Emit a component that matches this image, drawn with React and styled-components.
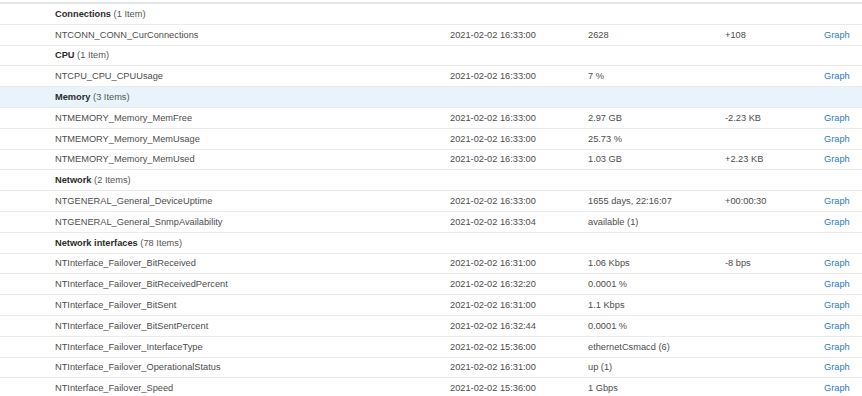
import React from 'react'
import styled, { createGlobalStyle } from 'styled-components'

const GlobalStyle = createGlobalStyle`
    html, body {
        margin: 0;
        padding: 0;
        background: #fff;
    }
    body {
        font-family: "Liberation Sans", Arial, sans-serif;
        font-size: 9.25px;
        color: #4a4a4a;
    }
`

const Table = styled.div`
    width: 862px;
    padding-top: 2px;
    border-top: 0;
    box-sizing: border-box;
    overflow: hidden;
`

const TopEdge = styled.div`
    height: 2px;
    background: #e2e5e9;
`

const Row = styled.div`
    display: grid;
    grid-template-columns: 395px 138px 137px 99px 1fr;
    align-items: center;
    height: 19.8px;
    padding-left: 55px;
    border-bottom: 1px solid #ebebeb;
    background: ${p => (p.$active ? '#e8f3fc' : '#fff')};
    white-space: nowrap;
`

const GroupTitle = styled.div`
    grid-column: 1 / -1;
    color: #3a3a3a;
    b {
        font-weight: bold;
        color: #2b2b2b;
    }
    span {
        color: #555;
    }
`

const Cell = styled.div`
    color: #4d4d4d;
`

const GraphLink = styled.a`
    color: #2b7bc0;
    text-decoration: none;
    cursor: pointer;
`

const groups = [
    {
        name: 'Connections',
        count: '1 Item',
        items: [['NTCONN_CONN_CurConnections', '2021-02-02 16:33:00', '2628', '+108']],
    },
    {
        name: 'CPU',
        count: '1 Item',
        items: [['NTCPU_CPU_CPUUsage', '2021-02-02 16:33:00', '7 %', '']],
    },
    {
        name: 'Memory',
        count: '3 Items',
        active: true,
        items: [
            ['NTMEMORY_Memory_MemFree', '2021-02-02 16:33:00', '2.97 GB', '-2.23 KB'],
            ['NTMEMORY_Memory_MemUsage', '2021-02-02 16:33:00', '25.73 %', ''],
            ['NTMEMORY_Memory_MemUsed', '2021-02-02 16:33:00', '1.03 GB', '+2.23 KB'],
        ],
    },
    {
        name: 'Network',
        count: '2 Items',
        items: [
            ['NTGENERAL_General_DeviceUptime', '2021-02-02 16:33:00', '1655 days, 22:16:07', '+00:00:30'],
            ['NTGENERAL_General_SnmpAvailability', '2021-02-02 16:33:04', 'available (1)', ''],
        ],
    },
    {
        name: 'Network interfaces',
        count: '78 Items',
        items: [
            ['NTInterface_Failover_BitReceived', '2021-02-02 16:31:00', '1.06 Kbps', '-8 bps'],
            ['NTInterface_Failover_BitReceivedPercent', '2021-02-02 16:32:20', '0.0001 %', ''],
            ['NTInterface_Failover_BitSent', '2021-02-02 16:31:00', '1.1 Kbps', ''],
            ['NTInterface_Failover_BitSentPercent', '2021-02-02 16:32:44', '0.0001 %', ''],
            ['NTInterface_Failover_InterfaceType', '2021-02-02 15:36:00', 'ethernetCsmacd (6)', ''],
            ['NTInterface_Failover_OperationalStatus', '2021-02-02 16:31:00', 'up (1)', ''],
            ['NTInterface_Failover_Speed', '2021-02-02 15:36:00', '1 Gbps', ''],
        ],
    },
]

const App = () => {
    return (
        <>
            <GlobalStyle />
            <Table>
                <TopEdge />
                {groups.map(g => (
                    <React.Fragment key={g.name}>
                        <Row $active={g.active}>
                            <GroupTitle>
                                <b>{g.name}</b> <span>({g.count})</span>
                            </GroupTitle>
                        </Row>
                        {g.items.map(([name, time, value, change]) => (
                            <Row key={name}>
                                <Cell>{name}</Cell>
                                <Cell>{time}</Cell>
                                <Cell>{value}</Cell>
                                <Cell>{change}</Cell>
                                <GraphLink>Graph</GraphLink>
                            </Row>
                        ))}
                    </React.Fragment>
                ))}
            </Table>
        </>
    )
}

export default App
